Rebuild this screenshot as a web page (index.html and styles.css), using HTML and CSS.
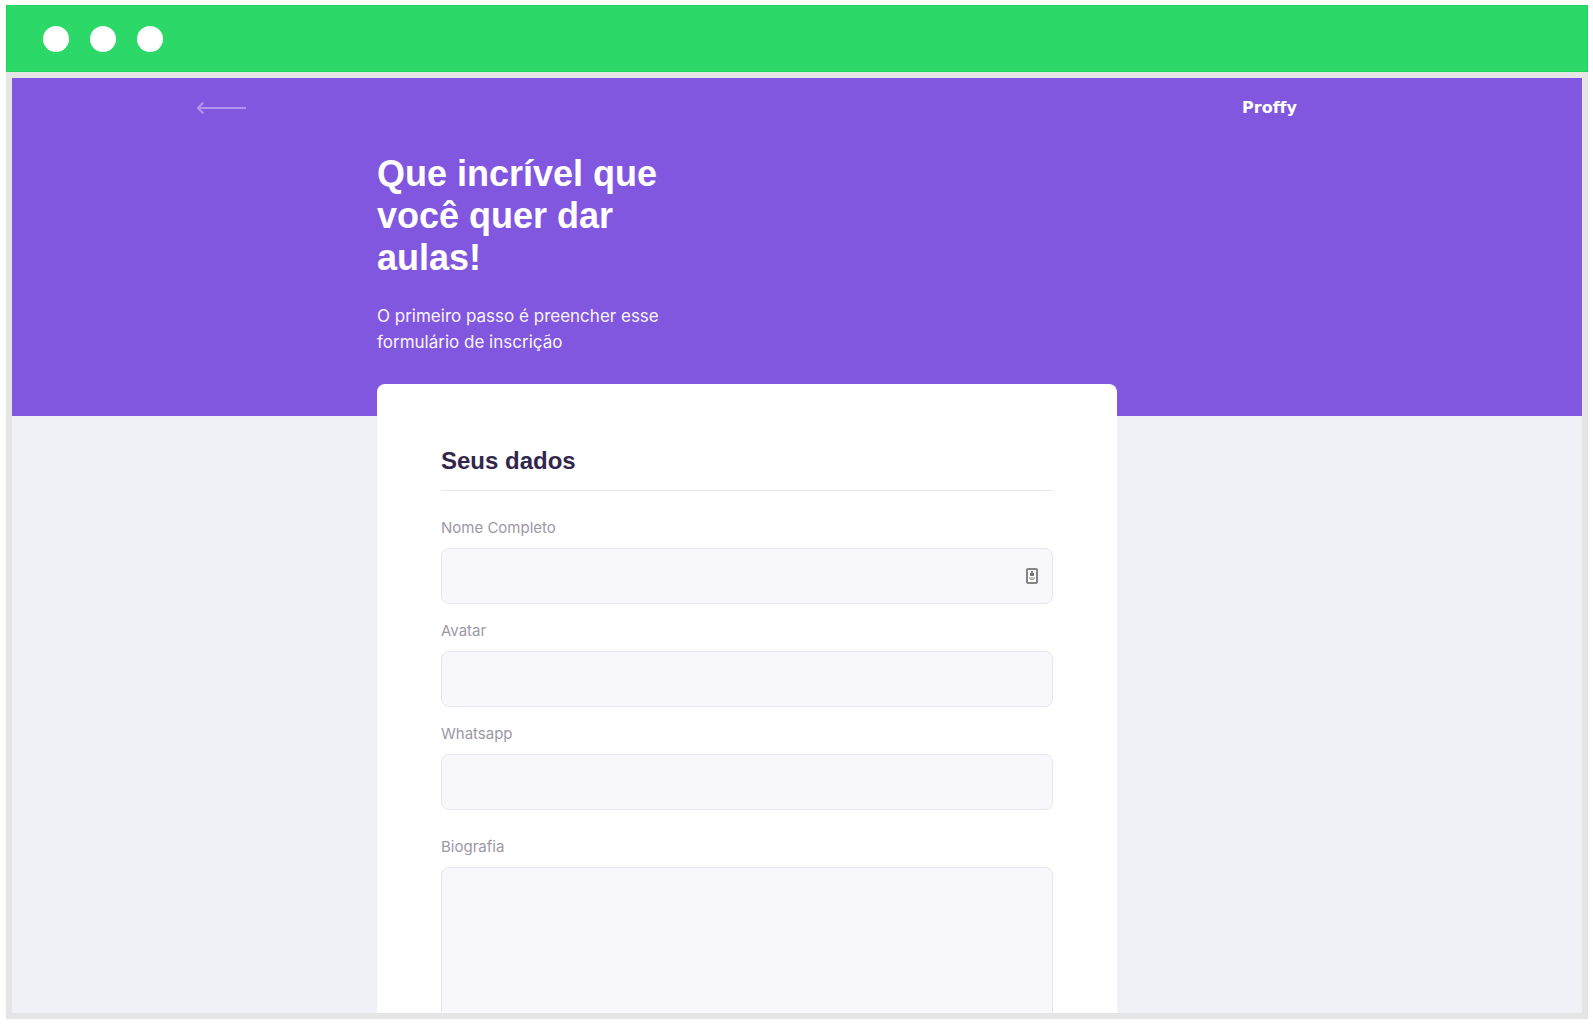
FILE: index.html
```html
<!DOCTYPE html>
<html lang="pt-BR">
<head>
<meta charset="utf-8">
<meta name="viewport" content="width=device-width, initial-scale=1">
<title>Proffy</title>
<link rel="stylesheet" href="styles.css">
</head>
<body>
<div class="window">
  <div class="titlebar">
    <span class="dot"></span>
    <span class="dot"></span>
    <span class="dot"></span>
  </div>
  <div class="screen">
    <header class="page-header">
      <nav class="topbar">
        <a class="back" href="#" aria-label="Voltar">
          <svg width="50" height="14" viewBox="0 0 50 14" fill="none" stroke="currentColor" stroke-width="2"><path d="M49 7H1M6.300 1.500L1 7L6.300 12.500"/></svg>
        </a>
        <a class="logo" href="#">Proffy</a>
      </nav>
      <div class="intro">
        <h1 class="headline">Que incrível que você quer dar aulas!</h1>
        <p class="lead">O primeiro passo é preencher esse formulário de inscrição</p>
      </div>
    </header>
    <main class="content">
      <form class="card">
        <h2 class="section-title">Seus dados</h2>
        <div class="field">
          <label class="label" for="name">Nome Completo</label>
          <div class="control">
            <input class="input" id="name" type="text">
            <svg class="contact" width="12" height="16" viewBox="0 0 12 16"><rect x="1" y="1" width="10" height="14" rx="1" fill="#fff" stroke="#858585" stroke-width="2"/><rect x="5" y="3" width="2" height="3" fill="#858585"/><rect x="4" y="5" width="4" height="3" fill="#777"/><path d="M3 9H9V11H3Z" fill="#c4c4c4"/><path d="M4 11H8V12H4Z" fill="#aaa"/></svg>
          </div>
        </div>
        <div class="field">
          <label class="label" for="avatar">Avatar</label>
          <input class="input" id="avatar" type="text">
        </div>
        <div class="field">
          <label class="label" for="whatsapp">Whatsapp</label>
          <input class="input" id="whatsapp" type="text">
        </div>
        <div class="field field-bio">
          <label class="label" for="bio">Biografia</label>
          <textarea class="input textarea" id="bio"></textarea>
        </div>
      </form>
    </main>
  </div>
</div>
</body>
</html>
```
FILE: styles.css
```css
* {
  box-sizing: border-box;
  margin: 0;
}

body {
  height: 100vh;
  padding: 5px 5px 6px 6px;
  background: #fff;
  font-family: Inter, "Open Sans", sans-serif;
}

/* Browser window frame */
.window {
  display: flex;
  flex-direction: column;
  height: 100%;
  background: #e5e5e5;
  box-shadow: 0 0 1px #e5e5e5;
}

.titlebar {
  display: flex;
  flex: none;
  align-items: center;
  gap: 21px;
  padding: 20px 36px 19px;
  background: #2cd867;
  border: 1px solid #1ed45a;
}

.dot {
  width: 26px;
  height: 26px;
  border-radius: 50%;
  background: #fff;
}

.screen {
  flex: 1;
  min-height: 0;
  margin: 6px;
  overflow-y: auto;
  scrollbar-width: none;
  background: #f0f0f7;
}

/* Page header */
.page-header {
  padding: 0 100px 61px 0;
  background: #8257e0;
}

.topbar {
  display: flex;
  align-items: center;
  justify-content: space-between;
  max-width: 1100px;
  height: 60px;
  margin: 0 auto;
}

.back {
  display: flex;
  color: #b294ef;
}

.logo {
  color: #fff;
  font: bold 16px/20px "DejaVu Sans", sans-serif;
  font-variant-ligatures: none;
  text-decoration: none;
}

.intro {
  max-width: 740px;
  margin: 15px auto 0;
}

.headline {
  max-width: 300px;
  color: #fff;
  font: bold 36px/42px "Liberation Sans", sans-serif;
}

.lead {
  max-width: 300px;
  margin-top: 24px;
  color: #f8f5ff;
  font-size: 17px;
  line-height: 26px;
}

/* Form card */
.content {
  padding-right: 100px;
}

.card {
  position: relative;
  max-width: 740px;
  margin: -32px auto 0;
  padding: 64px;
  border-radius: 8px;
  background: #fff;
}

.section-title {
  margin-bottom: 25px;
  padding-bottom: 16px;
  border-bottom: 1px solid #e6e6f0;
  color: #32264d;
  font: bold 24px/26px "Liberation Sans", sans-serif;
}

.field {
  margin-bottom: 15px;
}

.field-bio {
  margin-top: 25px;
}

.label {
  display: block;
  margin-bottom: 8px;
  color: #9c98a6;
  font-size: 15px;
  line-height: 24px;
}

.control {
  position: relative;
}

.input {
  display: block;
  width: 100%;
  height: 56px;
  padding: 0 16px;
  border: 1px solid #e6e6f0;
  border-radius: 8px;
  outline: 0;
  background: #f8f8fc;
  color: #32264d;
  font: 16px/24px Inter, sans-serif;
}

.textarea {
  height: 300px;
  padding: 16px;
  resize: vertical;
}

.contact {
  position: absolute;
  top: 20px;
  right: 15px;
}
```
